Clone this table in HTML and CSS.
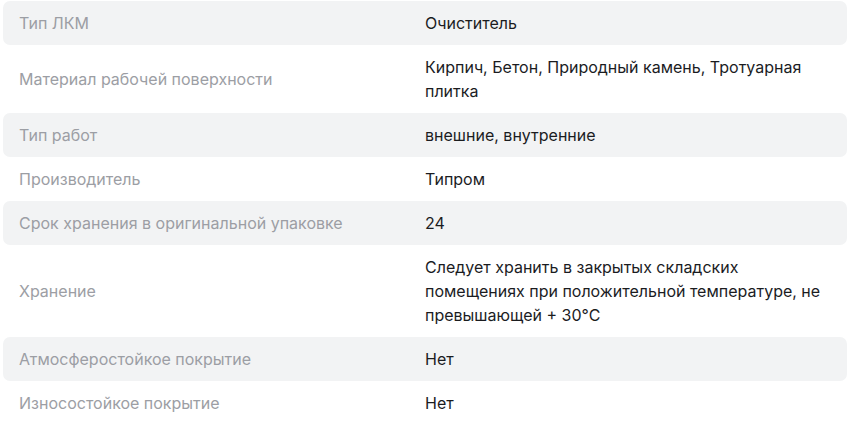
FILE: index.html
```html
<!DOCTYPE html>
<html lang="ru">
<head>
<meta charset="utf-8">
<link rel="stylesheet" href="styles.css">
</head>
<body>
<div class="specs">
  <div class="row"><div class="name">Тип ЛКМ</div><div class="value">Очиститель</div></div>
  <div class="row"><div class="name">Материал рабочей поверхности</div><div class="value">Кирпич, Бетон, Природный камень, Тротуарная плитка</div></div>
  <div class="row"><div class="name">Тип работ</div><div class="value">внешние, внутренние</div></div>
  <div class="row"><div class="name">Производитель</div><div class="value">Типром</div></div>
  <div class="row"><div class="name">Срок хранения в оригинальной упаковке</div><div class="value">24</div></div>
  <div class="row"><div class="name">Хранение</div><div class="value">Следует хранить в закрытых складских помещениях при положительной температуре, не превышающей + 30°C</div></div>
  <div class="row"><div class="name">Атмосферостойкое покрытие</div><div class="value">Нет</div></div>
  <div class="row"><div class="name">Износостойкое покрытие</div><div class="value">Нет</div></div>
</div>
</body>
</html>
```

FILE: styles.css
```css
html, body {
  margin: 0;
  padding: 0;
  background: #ffffff;
}
body {
  font-family: Inter, "Noto Sans", sans-serif;
  font-size: 16px;
  line-height: 24px;
}
.specs {
  display: flex;
  flex-direction: column;
  padding: 1px 3px 0;
}
.row {
  display: grid;
  grid-template-columns: 1fr 1fr;
  align-items: center;
  border-radius: 7px;
  padding: 10px 0;
}
.row:nth-child(odd) {
  background: #f2f3f4;
}
.name {
  color: #9c9ea4;
  padding-left: 16px;
  padding-right: 16px;
}
.value {
  color: #1b1c1f;
  padding-right: 16px;
}
```
